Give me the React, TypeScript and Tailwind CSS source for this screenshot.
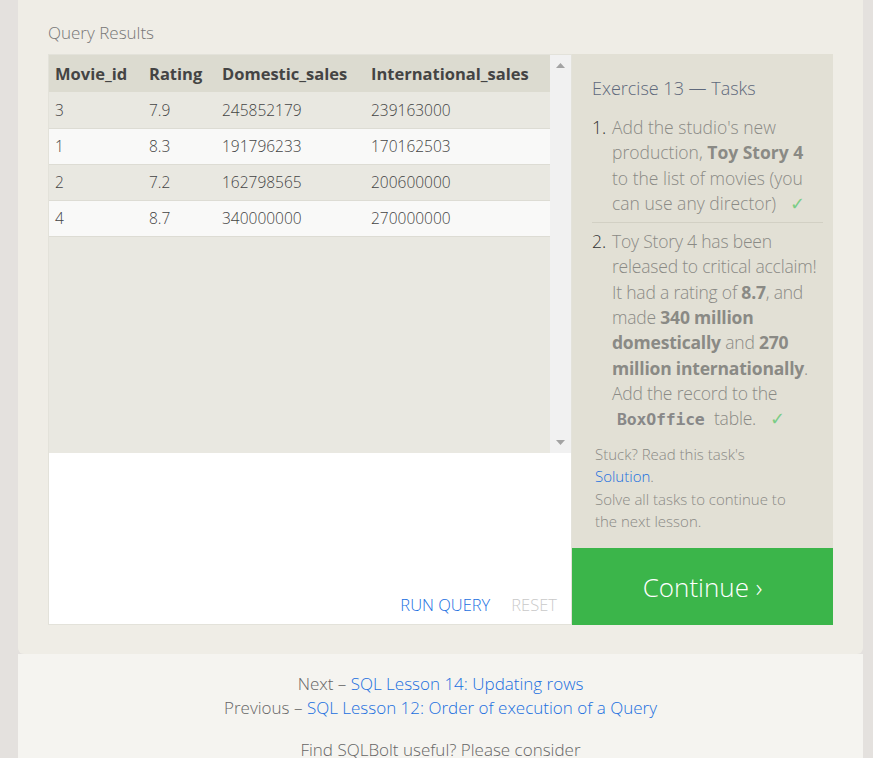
import React from "react";

interface Row {
  id: string;
  rating: string;
  domestic: string;
  intl: string;
}

const rows: Row[] = [
  { id: "3", rating: "7.9", domestic: "245852179", intl: "239163000" },
  { id: "1", rating: "8.3", domestic: "191796233", intl: "170162503" },
  { id: "2", rating: "7.2", domestic: "162798565", intl: "200600000" },
  { id: "4", rating: "8.7", domestic: "340000000", intl: "270000000" },
];

const Check = () => <span className="ml-[14px] text-[#7acd86]">✓</span>;

export default function App() {
  return (
    <div
      className="min-h-[758px] bg-[#e4e1de] pl-[18px] pr-[10px]"
      style={{ fontFamily: '"Open Sans", "Liberation Sans", sans-serif' }}
    >
      {/* Exercise panel */}
      <div className="rounded-b-md bg-[#efede6] px-[30px] pb-[29px] pt-[21px]">
        <div className="mb-[9px] text-[17px] font-light leading-[24px] text-[#777]">
          Query Results
        </div>

        <div className="flex h-[571px]">
          {/* Results + editor */}
          <div className="flex w-[524px] flex-col border border-[#e3e2da] bg-white">
            <div className="flex h-[398px] bg-[#e9e8e1]">
              <div className="flex-1">
                <table className="w-full border-collapse text-left text-[#444]">
                  <thead>
                    <tr className="h-[37px] bg-[#dcdbd0] text-[16.5px]">
                      <th className="w-[94px] pl-[6px] pt-[2px] font-bold">Movie_id</th>
                      <th className="w-[73px] pl-[6px] pt-[2px] font-bold">Rating</th>
                      <th className="w-[149px] pl-[6px] pt-[2px] font-bold">Domestic_sales</th>
                      <th className="pl-[6px] pt-[2px] font-bold">International_sales</th>
                    </tr>
                  </thead>
                  <tbody className="text-[15.5px] font-light">
                    {rows.map((r, i) => (
                      <tr
                        key={r.id}
                        className={
                          i % 2 === 0
                            ? "h-[36px] border-b border-[#dddcd4] bg-[#e9e8e1]"
                            : "h-[36px] border-b border-[#dddcd4] bg-[#f9f9f8]"
                        }
                      >
                        <td className="pl-[6px] pt-[2px]">{r.id}</td>
                        <td className="pl-[6px] pt-[2px]">{r.rating}</td>
                        <td className="pl-[6px] pt-[2px]">{r.domestic}</td>
                        <td className="pl-[6px] pt-[2px]">{r.intl}</td>
                      </tr>
                    ))}
                  </tbody>
                </table>
              </div>
              {/* scrollbar */}
              <div className="flex w-[21px] flex-col items-center justify-between bg-[#f1f1f1] py-[8px]">
                <svg width="9" height="5" viewBox="0 0 9 5">
                  <path d="M4.5 0L9 5H0z" fill="#a3a3a3" />
                </svg>
                <svg width="9" height="5" viewBox="0 0 9 5">
                  <path d="M0 0h9L4.5 5z" fill="#a3a3a3" />
                </svg>
              </div>
            </div>
            <div className="flex flex-1 items-end justify-end gap-[21px] pb-[6px] pr-[14px] text-[16.5px] font-light">
              <span className="text-[#1a6fdf]">RUN QUERY</span>
              <span className="text-[#c9c9c9]">RESET</span>
            </div>
          </div>

          {/* Tasks */}
          <div className="flex w-[261px] flex-col">
            <div className="flex-1 bg-[#e2e0d5] pl-[20px] pr-[10px] pt-[22px]">
              <div className="text-[18px] font-light leading-[24px] text-[#5f697c]">
                Exercise 13 — Tasks
              </div>
              <ol className="mt-[15px] whitespace-nowrap text-[17.5px] font-light leading-[25.3px] text-[#8a8a85]">
                <li className="flex border-b border-[#d2d0c4] pb-[6px]">
                  <span className="w-[20px] shrink-0 text-[#333]">1.</span>
                  <span>
                    Add the studio's new
                    <br />
                    production, <b className="font-bold">Toy Story 4</b>
                    <br />
                    to the list of movies (you
                    <br />
                    can use any director)
                    <Check />
                  </span>
                </li>
                <li className="flex pt-[6px]">
                  <span className="w-[20px] shrink-0 text-[#333]">2.</span>
                  <span className="tracking-[-0.2px]">
                    Toy Story 4 has been
                    <br />
                    released to critical acclaim!
                    <br />
                    It had a rating of <b className="font-bold">8.7</b>, and
                    <br />
                    made <b className="font-bold">340 million</b>
                    <br />
                    <b className="font-bold">domestically</b> and <b className="font-bold">270</b>
                    <br />
                    <b className="font-bold">million internationally</b>.
                    <br />
                    Add the record to the
                    <br />
                    <code
                      className="px-[5px] font-bold text-[#888]"
                      style={{ fontFamily: '"DejaVu Sans Mono", monospace', fontSize: "16.5px" }}
                    >
                      BoxOffice
                    </code>{" "}
                    table.
                    <Check />
                  </span>
                </li>
              </ol>
              <div className="mt-[10px] pl-[3px] text-[15px] font-light leading-[22.5px] text-[#8a8a85]">
                Stuck? Read this task's
                <br />
                <span className="text-[#1a6fdf]">Solution</span>.
                <br />
                Solve all tasks to continue to
                <br />
                the next lesson.
              </div>
            </div>
            <div className="flex h-[77px] items-center justify-center bg-[#3bb54a] pt-[1px] text-[26px] font-light text-white">
              Continue ›
            </div>
          </div>
        </div>
      </div>

      {/* Footer */}
      <div className="bg-[#f5f4f0] pt-[18px] text-center text-[17px] font-light leading-[24px] text-[#666]">
        <div>
          Next – <span className="text-[#1a6fdf]">SQL Lesson 14: Updating rows</span>
        </div>
        <div>
          Previous – <span className="text-[#1a6fdf]">SQL Lesson 12: Order of execution of a Query</span>
        </div>
        <div className="mt-[18px]">Find SQLBolt useful? Please consider</div>
      </div>
    </div>
  );
}
